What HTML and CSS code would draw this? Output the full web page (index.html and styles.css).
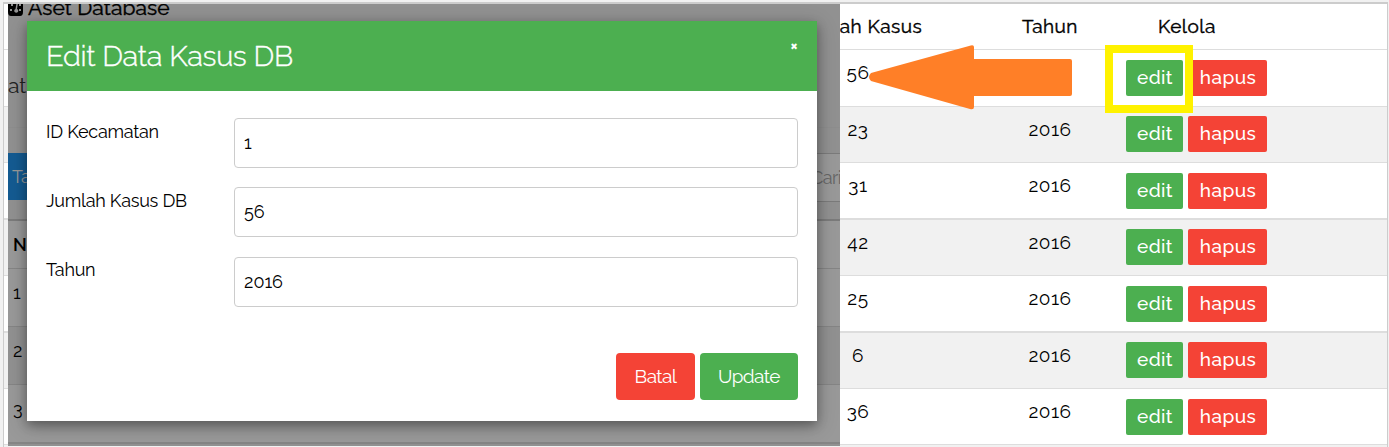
FILE: index.html
```
<!DOCTYPE html>
<html lang="id">
<head>
<meta charset="utf-8">
<title>Edit Data Kasus DB</title>
<link rel="stylesheet" href="styles.css">
</head>
<body>
<main class="stage">
  <section class="table">
    <div class="row head"><span></span><span class="th-kasus">Jumlah Kasus</span><span class="th-tahun">Tahun</span><span class="th-kelola">Kelola</span></div>
    <div class="row tall"><span></span><span class="num">56</span><span class="num"></span><span class="actions"><button class="btn edit">edit</button><button class="btn hapus">hapus</button></span></div>
    <div class="row alt"><span></span><span class="num">23</span><span class="num">2016</span><span class="actions"><button class="btn edit">edit</button><button class="btn hapus">hapus</button></span></div>
    <div class="row tall thick"><span></span><span class="num">31</span><span class="num">2016</span><span class="actions"><button class="btn edit">edit</button><button class="btn hapus">hapus</button></span></div>
    <div class="row alt"><span></span><span class="num">42</span><span class="num">2016</span><span class="actions"><button class="btn edit">edit</button><button class="btn hapus">hapus</button></span></div>
    <div class="row tall thick"><span></span><span class="num">25</span><span class="num">2016</span><span class="actions"><button class="btn edit">edit</button><button class="btn hapus">hapus</button></span></div>
    <div class="row alt"><span></span><span class="num">6</span><span class="num">2016</span><span class="actions"><button class="btn edit">edit</button><button class="btn hapus">hapus</button></span></div>
    <div class="row"><span></span><span class="num">36</span><span class="num">2016</span><span class="actions"><button class="btn edit">edit</button><button class="btn hapus">hapus</button></span></div>
    <div class="row alt last"></div>
  </section>

  <section class="panel">
    <div class="panel-top">
      <h2 class="aset"><svg class="gauge" width="15" height="13" viewBox="0 0 15 13"><path d="M0 0h15v9q0 4-3 4H3q-3 0-3-4z"/><path class="gauge-mark" d="M2 6h2v2H2zM11 6h2v2h-2zM8.500 0l-1 6a2 2 0 1 0 1.500 0l1-6zM3 1h2v2H3zM11 1h2v2h-2z"/></svg><span>Aset Database</span></h2>
      <p class="data-title">at</p>
    </div>
    <div class="tools"><span class="tambah">Ta</span><span class="cari">Cari</span></div>
    <div class="list">
      <div class="list-row list-head">No</div>
      <div class="list-row">1</div>
      <div class="list-row shade">2</div>
      <div class="list-row list-end">3</div>
    </div>

    <div class="modal">
      <header class="modal-head"><h1 class="modal-title">Edit Data Kasus DB</h1><span class="close">×</span></header>
      <div class="modal-body">
        <div class="field"><span class="label">ID Kecamatan</span><span class="input">1</span></div>
        <div class="field second"><span class="label">Jumlah Kasus DB</span><span class="input">56</span></div>
        <div class="field"><span class="label third">Tahun</span><span class="input">2016</span></div>
        <div class="footer"><button class="big batal">Batal</button><button class="big update">Update</button></div>
      </div>
    </div>
  </section>

  <svg class="arrow" width="205" height="68" viewBox="0 0 205 68"><path d="M2 30L100 3Q105 1 105 4V16H201Q203 16 203 18V51Q203 53 201 53H105V64Q105 67 101 66L2 38Q-2 34 2 30Z"/></svg>
  <div class="highlight"></div>
</main>
</body>
</html>
```
FILE: styles.css
```
* { box-sizing: border-box; }
body {
  margin: 0;
  background: #f1f1f1;
  color: #000;
  font-family: Raleway, Lato, sans-serif;
  font-variant-numeric: oldstyle-nums;
}
button { font-family: inherit; border: 0; padding: 0; margin: 0; color: #fff; }
.stage { position: relative; width: 1389px; height: 447px; overflow: hidden; padding: 2px 1px 0 3px; }
.table { height: 445px; border: 1px solid #ccc; border-top-width: 2px; border-bottom: 0; background: #fff; overflow: hidden; }
.row {
  display: grid;
  grid-template-columns: 728px 252px 132px 1fr;
  height: 56px;
  border-bottom: 1px solid #ddd;
}
.row.tall { height: 57px; }
.row.thick { border-bottom-width: 2px; }
.row.alt { background: #f1f1f1; }
.row.head { height: 46px; font-size: 19px; line-height: 24px; padding-top: 10px; text-align: center; }
.row.last { border: 0; }
.th-kasus, .th-tahun, .th-kelola { -webkit-text-stroke: .4px #000; }
.th-kasus { letter-spacing: .5px; padding-left: 1px; }
.th-tahun { letter-spacing: .5px; }
.row.head .th-kelola { text-align: left; padding-left: 42px; letter-spacing: .5px; }
.num { text-align: center; font-size: 19px; line-height: 24px; padding-top: 10px; letter-spacing: .5px; }
.actions { display: flex; gap: 5px; padding: 10px 0 0 10px; }
.alt .actions { padding-top: 9px; }
.btn { height: 36px; border-radius: 2px; padding-bottom: 2px; font-size: 19px; line-height: 32px; font-weight: 500; }
.edit { width: 57px; background: #4caf50; letter-spacing: .4px; padding-left: 1px; }
.hapus { width: 79px; background: #f44336; letter-spacing: .4px; padding-left: 1px; }

.panel { position: absolute; left: 8px; top: 4px; width: 832px; height: 442px; background: #919191; overflow: hidden; }
.panel-top { height: 124px; border-bottom: 1px solid #8e8e8e; }
.aset { display: flex; gap: 5px; margin: 0; height: 58px; font-size: 21px; font-weight: 400; line-height: 24px; -webkit-text-stroke: .4px #000; }
.aset span { margin-top: -8px; letter-spacing: .1px; }
.gauge { margin-top: -1px; }
.gauge-mark { fill: #919191; }
.data-title { margin: 11px 0 0; font-size: 21px; line-height: 26px; color: #222; }
.tools { display: flex; justify-content: space-between; margin-top: 25px; height: 49px; font-size: 18px; line-height: 47px; }
.tambah { width: 100px; height: 47px; padding-left: 4px; background: #145b92; color: #999; }
.cari { width: 120px; padding-left: 90px; border: 1px solid #7b7b7b; border-right: 0; background: #999; color: #666; font-size: 18px; letter-spacing: -.6px; }
.list { margin-top: 17px; border-top: 2px solid #7b7b7b; background: #999; }
.list-row { height: 58px; padding: 10px 0 0 5px; border-bottom: 1px solid #858585; font-size: 18px; line-height: 28px; }
.list-head { height: 48px; font-weight: 600; }
.shade { background: #919191; }
.list-end { height: 59px; border-bottom: 2px solid #858585; }

.modal { position: absolute; left: 19px; top: 17px; width: 790px; height: 400px; background: #fff; box-shadow: 0 4px 10px rgba(0,0,0,.3), 0 5px 20px rgba(0,0,0,.22); }
.modal-head { display: flex; justify-content: space-between; height: 70px; padding: 0 19px; background: #4caf50; color: #fff; }
.modal-title { margin: 0; font-size: 29px; font-weight: 300; line-height: 70px; letter-spacing: -.3px; -webkit-text-stroke: .4px #fff; }
.close { font-size: 16px; font-weight: 700; line-height: 49px; }
.modal-body { display: flex; flex-direction: column; gap: 20px; padding: 27px 19px 0; }
.field { display: grid; grid-template-columns: 188px 564px; height: 49px; font-size: 18px; }
.field.second { height: 50px; }
.label { line-height: 27px; letter-spacing: -.25px; }
.label.third { line-height: 26px; }
.input { height: 100%; border: 1px solid #ccc; border-radius: 4px; padding-left: 9px; line-height: 48px; }
.footer { display: flex; justify-content: flex-end; gap: 5px; padding-top: 27px; }
.big { height: 47px; border-radius: 4px; font-size: 19px; line-height: 45px; letter-spacing: -.6px; }
.batal { width: 79px; background: #f44336; }
.update { width: 98px; background: #4caf50; }

.arrow { position: absolute; left: 869px; top: 43px; fill: #ff7f27; }
.highlight { position: absolute; left: 1105px; top: 45px; width: 88px; height: 68px; border: 8px solid #fff200; }
```
